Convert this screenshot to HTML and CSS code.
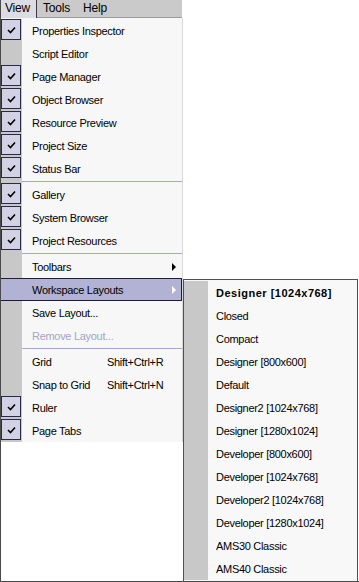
FILE: index.html
```html
<!DOCTYPE html>
<html lang="en">
<head>
    <meta charset="UTF-8">
    <meta name="viewport" content="width=device-width, initial-scale=1.0">
    <title>View menu</title>
    <link rel="stylesheet" href="styles.css">
</head>
<body>
    <div class="screen">
        <div class="menubar">
            <span class="mb-item open">View</span>
            <span class="mb-item">Tools</span>
            <span class="mb-item">Help</span>
        </div>

        <div class="menu">
            <div class="row"><span class="gutter"><span class="check"><svg width="9" height="8" viewBox="0 0 9 8"><path d="M1 4 L3.5 6.5 L8 1.5" fill="none" stroke="#000" stroke-width="1.6"/></svg></span></span><span class="label">Properties Inspector</span></div>
            <div class="row"><span class="gutter"></span><span class="label">Script Editor</span></div>
            <div class="row"><span class="gutter"><span class="check"><svg width="9" height="8" viewBox="0 0 9 8"><path d="M1 4 L3.5 6.5 L8 1.5" fill="none" stroke="#000" stroke-width="1.6"/></svg></span></span><span class="label">Page Manager</span></div>
            <div class="row"><span class="gutter"><span class="check"><svg width="9" height="8" viewBox="0 0 9 8"><path d="M1 4 L3.5 6.5 L8 1.5" fill="none" stroke="#000" stroke-width="1.6"/></svg></span></span><span class="label">Object Browser</span></div>
            <div class="row"><span class="gutter"><span class="check"><svg width="9" height="8" viewBox="0 0 9 8"><path d="M1 4 L3.5 6.5 L8 1.5" fill="none" stroke="#000" stroke-width="1.6"/></svg></span></span><span class="label">Resource Preview</span></div>
            <div class="row"><span class="gutter"><span class="check"><svg width="9" height="8" viewBox="0 0 9 8"><path d="M1 4 L3.5 6.5 L8 1.5" fill="none" stroke="#000" stroke-width="1.6"/></svg></span></span><span class="label">Project Size</span></div>
            <div class="row"><span class="gutter"><span class="check"><svg width="9" height="8" viewBox="0 0 9 8"><path d="M1 4 L3.5 6.5 L8 1.5" fill="none" stroke="#000" stroke-width="1.6"/></svg></span></span><span class="label">Status Bar</span></div>
            <div class="sep"><span class="gutter"></span><span class="line"></span></div>
            <div class="row"><span class="gutter"><span class="check"><svg width="9" height="8" viewBox="0 0 9 8"><path d="M1 4 L3.5 6.5 L8 1.5" fill="none" stroke="#000" stroke-width="1.6"/></svg></span></span><span class="label">Gallery</span></div>
            <div class="row"><span class="gutter"><span class="check"><svg width="9" height="8" viewBox="0 0 9 8"><path d="M1 4 L3.5 6.5 L8 1.5" fill="none" stroke="#000" stroke-width="1.6"/></svg></span></span><span class="label">System Browser</span></div>
            <div class="row"><span class="gutter"><span class="check"><svg width="9" height="8" viewBox="0 0 9 8"><path d="M1 4 L3.5 6.5 L8 1.5" fill="none" stroke="#000" stroke-width="1.6"/></svg></span></span><span class="label">Project Resources</span></div>
            <div class="sep"><span class="gutter"></span><span class="line"></span></div>
            <div class="row"><span class="gutter"></span><span class="label">Toolbars</span><span class="arrow"></span></div>
            <div class="row active"><span class="gutter"></span><span class="label">Workspace Layouts</span><span class="arrow"></span></div>
            <div class="row"><span class="gutter"></span><span class="label">Save Layout...</span></div>
            <div class="row disabled"><span class="gutter"></span><span class="label">Remove Layout...</span></div>
            <div class="sep"><span class="gutter"></span><span class="line"></span></div>
            <div class="row"><span class="gutter"></span><span class="label short">Grid</span><span class="keys">Shift+Ctrl+R</span></div>
            <div class="row"><span class="gutter"></span><span class="label short">Snap to Grid</span><span class="keys">Shift+Ctrl+N</span></div>
            <div class="row"><span class="gutter"><span class="check"><svg width="9" height="8" viewBox="0 0 9 8"><path d="M1 4 L3.5 6.5 L8 1.5" fill="none" stroke="#000" stroke-width="1.6"/></svg></span></span><span class="label">Ruler</span></div>
            <div class="row"><span class="gutter"><span class="check"><svg width="9" height="8" viewBox="0 0 9 8"><path d="M1 4 L3.5 6.5 L8 1.5" fill="none" stroke="#000" stroke-width="1.6"/></svg></span></span><span class="label">Page Tabs</span></div>
        </div>

        <div class="submenu">
            <div class="sub-row default"><span class="sub-gutter"></span><span class="sub-label">Designer [1024x768]</span></div>
            <div class="sub-row"><span class="sub-gutter"></span><span class="sub-label">Closed</span></div>
            <div class="sub-row"><span class="sub-gutter"></span><span class="sub-label">Compact</span></div>
            <div class="sub-row"><span class="sub-gutter"></span><span class="sub-label">Designer [800x600]</span></div>
            <div class="sub-row"><span class="sub-gutter"></span><span class="sub-label">Default</span></div>
            <div class="sub-row"><span class="sub-gutter"></span><span class="sub-label">Designer2 [1024x768]</span></div>
            <div class="sub-row"><span class="sub-gutter"></span><span class="sub-label">Designer [1280x1024]</span></div>
            <div class="sub-row"><span class="sub-gutter"></span><span class="sub-label">Developer [800x600]</span></div>
            <div class="sub-row"><span class="sub-gutter"></span><span class="sub-label">Developer [1024x768]</span></div>
            <div class="sub-row"><span class="sub-gutter"></span><span class="sub-label">Developer2 [1024x768]</span></div>
            <div class="sub-row"><span class="sub-gutter"></span><span class="sub-label">Developer [1280x1024]</span></div>
            <div class="sub-row"><span class="sub-gutter"></span><span class="sub-label">AMS30 Classic</span></div>
            <div class="sub-row"><span class="sub-gutter"></span><span class="sub-label">AMS40 Classic</span></div>
        </div>
    </div>
</body>
</html>
```

FILE: styles.css
```css
html, body {
    margin: 0;
    padding: 0;
    background: #fff;
}
body {
    font-family: "Liberation Sans", Arial, sans-serif;
    font-size: 11px;
    color: #000;
}
.screen {
    position: relative;
    width: 359px;
    height: 582px;
    box-sizing: border-box;
    border-left: 1px solid #4a4a4a;
    border-bottom: 1px solid #4a4a4a;
    background: #fff;
    overflow: hidden;
}

/* menu bar */
.menubar {
    display: flex;
    width: 181px;
    height: 17px;
    background: #cacaca;
    border-bottom: 1px solid #9a9a9a;
}
.mb-item {
    padding: 0 7px 0 6px;
    line-height: 17px;
    font-size: 12px;
    letter-spacing: -0.2px;
}
.mb-item.open {
    padding: 0 6px 0 4px;
    margin-bottom: -1px;
    background: #dcdce2;
    border-right: 1px solid #3a3a4a;
}

/* main menu */
.menu {
    width: 181px;
    padding-top: 1px;
    background: #f7f7f7;
    border-right: 1px solid #d8d8d8;
}
.row {
    display: flex;
    align-items: center;
    height: 23px;
    box-sizing: border-box;
}
.gutter {
    flex: none;
    align-self: stretch;
    width: 21px;
    background: #c8c8c8;
}
.check {
    display: flex;
    align-items: center;
    justify-content: center;
    width: 20px;
    height: 21px;
    box-sizing: border-box;
    border: 1px solid #2a2a48;
    background: #d2d2e4;
}
.label {
    padding-left: 10px;
    letter-spacing: -0.3px;
    white-space: nowrap;
}
.label.short {
    width: 75px;
}
.keys {
    letter-spacing: -0.3px;
    white-space: nowrap;
}
.arrow {
    margin-left: auto;
    margin-right: 6px;
    width: 0;
    height: 0;
    border-top: 4px solid transparent;
    border-bottom: 4px solid transparent;
    border-left: 4px solid #000;
}
.row.active {
    background: #b2b2d4;
    border: 1px solid #1e1e3c;
    margin-left: -1px;
}
.row.active .gutter {
    background: transparent;
    width: 21px;
}
.row.active .arrow {
    border-left-color: #fff;
    margin-right: 5px;
}
.row.disabled .label {
    color: #a4a4c8;
}
.sep {
    display: flex;
    height: 3px;
}
.sep .line {
    flex: 1;
    height: 1px;
    margin-top: 1px;
    background: #a8a8cc;
}

/* submenu popup, overlays the page */
.submenu {
    position: absolute;
    left: 182px;
    top: 279px;
    width: 175px;
    padding: 1px 0;
    box-sizing: border-box;
    background: #f8f8f8;
    border: 1px solid #505050;
}
.sub-row {
    display: flex;
    height: 23px;
    align-items: center;
}
.sub-gutter {
    flex: none;
    align-self: stretch;
    width: 24px;
    background: #c8c8c8;
}
.sub-label {
    padding-left: 8px;
    letter-spacing: -0.3px;
    white-space: nowrap;
}
.sub-row.default .sub-label {
    font-weight: bold;
    letter-spacing: 0.5px;
}
```
